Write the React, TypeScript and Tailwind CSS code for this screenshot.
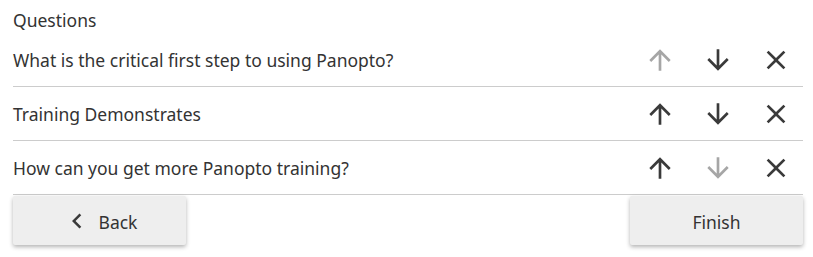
import React from 'react';

const UP = 'M4 12l1.41 1.41L11 7.83V20h2V7.83l5.58 5.59L20 12l-8-8-8 8z';
const DOWN = 'M20 12l-1.41-1.41L13 16.17V4h-2v12.17l-5.58-5.59L4 12l8 8 8-8z';
const CLOSE = 'M19 6.41L17.59 5 12 10.59 6.41 5 5 6.41 10.59 12 5 17.59 6.41 19 12 13.41 17.59 19 19 17.59 13.41 12z';
const CHEVRON = 'M15.41 7.41L14 6l-6 6 6 6 1.41-1.41L10.83 12z';

function Icon({ d, size = 32, className = '' }: { d: string; size?: number; className?: string }) {
  return (
    <svg width={size} height={size} viewBox="0 0 24 24" className={className} fill="currentColor">
      <path d={d} />
    </svg>
  );
}

const questions = [
  { text: 'What is the critical first step to using Panopto?', up: false, down: true },
  { text: 'Training Demonstrates', up: true, down: true },
  { text: 'How can you get more Panopto training?', up: true, down: false },
];

export default function App() {
  return (
    <div className="w-[813px] h-[257px] bg-white text-[#333333] px-[13px]" style={{ fontFamily: '"Noto Sans", "Open Sans", sans-serif' }}>
      <div className="w-[790px]">
        <div className="h-[33px] pt-[8px] text-[17.5px] leading-[24px]">Questions</div>
        {questions.map(q => (
          <div key={q.text} className="h-[54px] border-b border-[#cccccc] flex items-center justify-between">
            <span className="text-[17.5px] leading-[24px] pt-[1px]">{q.text}</span>
            <div className="flex items-center gap-[26px] pr-[11px]">
              <Icon d={UP} className={q.up ? 'text-[#3a3a3a]' : 'text-[#a6a6a6]'} />
              <Icon d={DOWN} className={q.down ? 'text-[#3a3a3a]' : 'text-[#a6a6a6]'} />
              <Icon d={CLOSE} className="text-[#3a3a3a]" />
            </div>
          </div>
        ))}
        <div className="flex justify-between mt-[1px]">
          <button className="w-[173px] h-[49px] pt-[3px] bg-[#eeeeee] rounded-[2px] shadow-[0_2px_4px_rgba(0,0,0,0.3)] flex items-center justify-center text-[17.5px] text-[#333333]">
            <Icon d={CHEVRON} size={30} className="text-[#3a3a3a] -mt-[2px]" />
            <span className="ml-[7px]">Back</span>
          </button>
          <button className="w-[173px] h-[49px] pt-[3px] bg-[#eeeeee] rounded-[2px] shadow-[0_2px_4px_rgba(0,0,0,0.3)] flex items-center justify-center text-[17.5px] text-[#333333]">
            Finish
          </button>
        </div>
      </div>
    </div>
  );
}
